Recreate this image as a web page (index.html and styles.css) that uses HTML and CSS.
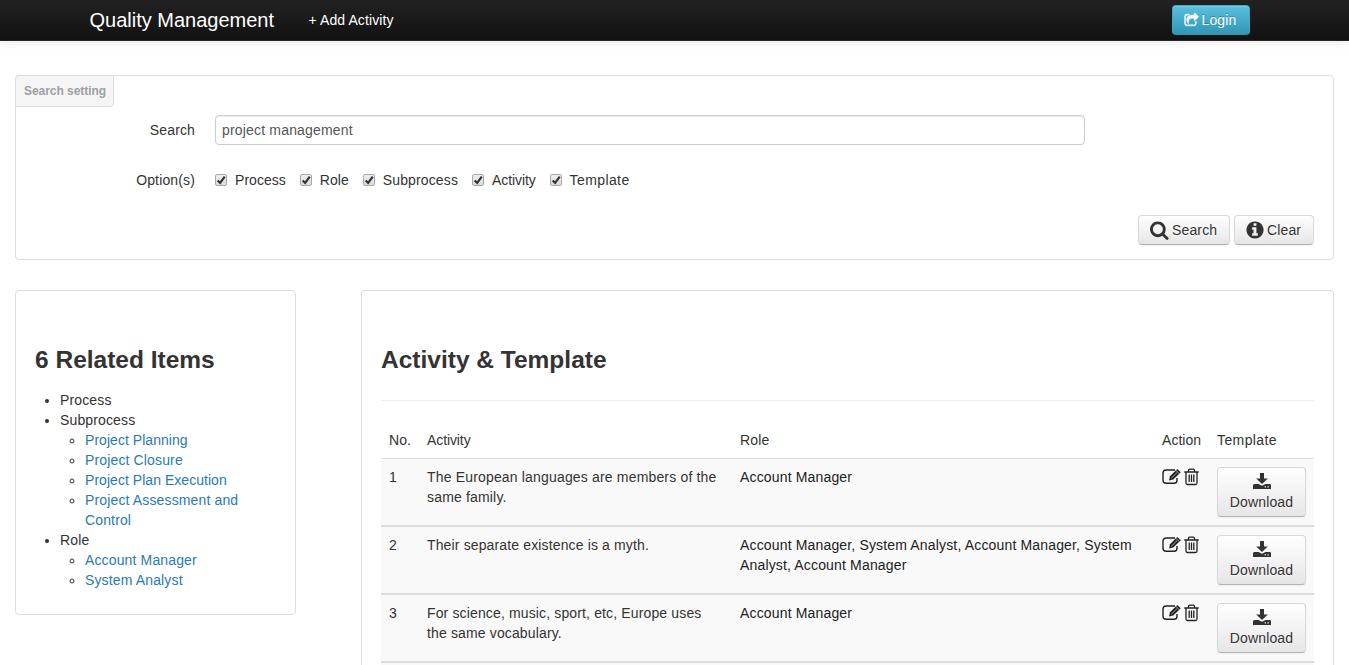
FILE: index.html
```html
<!DOCTYPE html>
<html lang="en">
<head>
<meta charset="utf-8">
<title>Quality Management</title>
<link rel="stylesheet" href="styles.css">
</head>
<body>
<svg class="sprite" aria-hidden="true">
  <symbol id="share" viewBox="0 0 1792 1792"><path d="M1472 989v259q0 119-84.5 203.5t-203.500 84.500h-832q-119 0-203.500-84.500t-84.500-203.500v-832q0-119 84.500-203.500t203.500-84.500h255q13 0 22.500 9.500t9.500 22.500q0 27-26 32-77 26-133 60-10 4-16 4h-112q-66 0-113 47t-47 113v832q0 66 47 113t113 47h832q66 0 113-47t47-113v-214q0-19 18-29 28-13 54-37 16-16 35-8 21 9 21 31zm237-496l-384 384q-18 19-45 19-12 0-25-5-39-17-39-59v-192h-160q-323 0-438 131-119 137-74 473 3 23-20 34-8 2-12 2-16 0-26-13-10-14-21-31t-39.500-68.500-49.500-99.500-38.500-114-17.500-122q0-49 3.500-91t14-90 28-88 47-81.500 68.500-74 94.500-61.500 124.500-48.500 159.500-30.500 196.500-11h160v-192q0-42 39-59 13-5 25-5 26 0 45 19l384 384q19 19 19 45t-19 45z"/></symbol>
  <symbol id="search" viewBox="0 0 1792 1792"><path d="M1152 832q0-185-131.5-316.500t-316.500-131.500-316.500 131.500-131.500 316.500 131.500 316.500 316.500 131.500 316.500-131.500 131.500-316.500zm512 832q0 52-38 90t-90 38q-54 0-90-38l-343-342q-179 124-399 124-143 0-273.500-55.500t-225-150-150-225-55.500-273.500 55.500-273.500 150-225 225-150 273.500-55.500 273.500 55.500 225 150 150 225 55.500 273.500q0 220-124 399l343 343q37 37 37 90z"/></symbol>
  <symbol id="info" viewBox="0 0 1792 1792"><path d="M1152 1376v-160q0-14-9-23t-23-9h-96v-512q0-14-9-23t-23-9h-320q-14 0-23 9t-9 23v160q0 14 9 23t23 9h96v320h-96q-14 0-23 9t-9 23v160q0 14 9 23t23 9h448q14 0 23-9t9-23zm-128-896v-160q0-14-9-23t-23-9h-192q-14 0-23 9t-9 23v160q0 14 9 23t23 9h192q14 0 23-9t9-23zm640 416q0 209-103 385.500t-279.500 279.500-385.500 103-385.500-103-279.500-279.500-103-385.500 103-385.500 279.500-279.500 385.500-103 385.500 103 279.500 279.500 103 385.500z"/></symbol>
  <symbol id="edit" viewBox="0 0 20 18"><path d="M13 2H4.200Q1 2 1 5v7.300q0 3 3.200 3h8q2.800 0 2.800-3V10" fill="none" stroke="currentColor" stroke-width="1.400"/><path d="M7 12.500l1-4.200L15.300 1l3.500 3.300L11.200 11.500z"/><path d="M9.300 10.200L15 4.700M14 2.500l3.400 3.200" fill="none" stroke="#f9f9f9" stroke-width=".6"/></symbol>
  <symbol id="trash" viewBox="0 0 15 18"><path d="M.3 4h14.400M4.500 4V2.500q0-1.300 1.300-1.300h3.400q1.300 0 1.300 1.300V4M2 4v11q0 1.500 1.500 1.500h8q1.500 0 1.500-1.500V4M5.200 6.500v7.500M7.500 6.500v7.500M9.800 6.500v7.500" fill="none" stroke="currentColor" stroke-width="1.300"/></symbol>
  <symbol id="download" viewBox="0 0 18 17"><path d="M7 0h4v5.500h3.800L9 11 3.200 5.500H7z"/><path fill-rule="evenodd" d="M1 11h4.500L9 12.800 12.500 11H17l1 1v4H0v-4zM11.700 13.300v1.200H13v-1.200zM14.500 13.300v1.200h1.300v-1.200z"/></symbol>
</svg>
<header class="navbar">
  <div class="navbar-inner">
    <a class="brand">Quality Management</a>
    <a class="nav-link">+ Add Activity</a>
    <button class="btn btn-info"><svg class="icon-share"><use href="#share"/></svg>Login</button>
  </div>
</header>
<main class="page">
  <section class="panel search-panel">
    <div class="tab">Search setting</div>
    <div class="field"><label class="label" for="q">Search</label><input class="query" id="q" type="text" value="project management"></div>
    <div class="field options">
      <span class="label">Option(s)</span>
      <label class="option"><span class="check"><svg viewBox="0 0 12 12"><path d="M2 6.500l3 3L10.500 2"/></svg></span>Process</label>
      <label class="option"><span class="check"><svg viewBox="0 0 12 12"><path d="M2 6.500l3 3L10.500 2"/></svg></span>Role</label>
      <label class="option mid"><span class="check"><svg viewBox="0 0 12 12"><path d="M2 6.500l3 3L10.500 2"/></svg></span>Subprocess</label>
      <label class="option tight"><span class="check"><svg viewBox="0 0 12 12"><path d="M2 6.500l3 3L10.500 2"/></svg></span>Activity</label>
      <label class="option last"><span class="check"><svg viewBox="0 0 12 12"><path d="M2 6.500l3 3L10.500 2"/></svg></span>Template</label>
    </div>
    <div class="buttons">
      <button class="btn btn-search"><svg class="icon-large"><use href="#search"/></svg>Search</button>
      <button class="btn btn-clear"><svg class="icon-large"><use href="#info"/></svg>Clear</button>
    </div>
  </section>
  <div class="columns">
    <aside class="panel related">
      <h3 class="title">6 Related Items</h3>
      <ul class="tree">
        <li>Process</li>
        <li>Subprocess
          <ul class="subtree">
            <li><a class="tight">Project Planning</a></li>
            <li><a>Project Closure</a></li>
            <li><a class="tight">Project Plan Execution</a></li>
            <li><a>Project Assessment and Control</a></li>
          </ul>
        </li>
        <li>Role
          <ul class="subtree">
            <li><a>Account Manager</a></li>
            <li><a>System Analyst</a></li>
          </ul>
        </li>
      </ul>
    </aside>
    <section class="panel results">
      <h3 class="title">Activity &amp; Template</h3>
      <hr class="rule">
      <div class="row head"><div class="tight">No.</div><div class="snug">Activity</div><div>Role</div><div class="tight">Action</div><div class="wide">Template</div></div>
      <div class="row item"><div>1</div><div class="lead">The European languages are members of the same family.</div><div class="role">Account Manager</div><div class="actions"><svg class="icon-edit"><use href="#edit"/></svg><svg class="icon-trash"><use href="#trash"/></svg></div><div><button class="btn btn-download"><svg class="icon-download"><use href="#download"/></svg>Download</button></div></div>
      <div class="row item"><div>2</div><div>Their separate existence is a myth.</div><div class="role">Account Manager, System Analyst, Account Manager, System Analyst, Account Manager</div><div class="actions"><svg class="icon-edit"><use href="#edit"/></svg><svg class="icon-trash"><use href="#trash"/></svg></div><div><button class="btn btn-download"><svg class="icon-download"><use href="#download"/></svg>Download</button></div></div>
      <div class="row item"><div>3</div><div>For science, music, sport, etc, Europe uses the same vocabulary.</div><div class="role">Account Manager</div><div class="actions"><svg class="icon-edit"><use href="#edit"/></svg><svg class="icon-trash"><use href="#trash"/></svg></div><div><button class="btn btn-download"><svg class="icon-download"><use href="#download"/></svg>Download</button></div></div>
      <div class="row next"></div>
    </section>
  </div>
</main>
</body>
</html>
```
FILE: styles.css
```css
* { box-sizing: border-box; }
body {
  margin: 0;
  height: 665px;
  overflow: hidden;
  font: 14px/20px "Liberation Sans", Arial, sans-serif;
  letter-spacing: .14px;
  color: #333;
  background: #fff;
}
svg { fill: currentColor; flex: none; }
.sprite { position: absolute; width: 0; height: 0; }
.navbar {
  height: 41px;
  background: linear-gradient(#222, #111);
  border-bottom: 1px solid #252525;
  box-shadow: 0 1px 10px rgba(0, 0, 0, .1);
}
.navbar-inner { display: flex; align-items: center; width: 1170px; height: 40px; margin: 0 auto; color: #fff; }
.brand { font-size: 20px; letter-spacing: 0; width: 219px; }
.nav-link { letter-spacing: .1px; }
.btn {
  display: flex;
  align-items: center;
  height: 30px;
  padding: 0 12px;
  font: inherit;
  letter-spacing: inherit;
  color: #333;
  text-shadow: 0 1px 1px rgba(255, 255, 255, .75);
  background: linear-gradient(#fff, #e6e6e6);
  border: 1px solid #ccc;
  border-color: #d9d9d9 #d9d9d9 #b3b3b3;
  border-radius: 4px;
  box-shadow: inset 0 1px 0 rgba(255, 255, 255, .2), 0 1px 2px rgba(0, 0, 0, .05);
}
.btn-info {
  width: 78px;
  margin-left: auto;
  margin-right: 10px;
  padding: 0 11px;
  gap: 3px;
  color: #fff;
  text-shadow: 0 -1px 0 rgba(0, 0, 0, .25);
  background: linear-gradient(#5bc0de, #2f96b4);
  border-color: #41a7c5 #41a7c5 #2f8fab;
}
.icon-share { width: 15px; height: 15px; stroke: currentColor; stroke-width: 50; }
.page { padding: 34px 15px 0; }
.panel { background: #fff; border: 1px solid #ddd; border-radius: 4px; }
.search-panel { height: 185px; }
.tab {
  width: 99px;
  height: 32px;
  margin: -1px 0 0 -1px;
  padding: 5px 0 5px 8px;
  font-size: 12px;
  font-weight: bold;
  letter-spacing: -.04px;
  white-space: nowrap;
  color: #9da0a4;
  background: #f5f5f5;
  border: 1px solid #ddd;
  border-radius: 4px 0 4px 0;
}
.field { display: flex; align-items: center; height: 30px; margin-top: 8px; }
.label { width: 179px; margin-right: 20px; text-align: right; }
.query {
  width: 870px;
  height: 30px;
  padding: 4px 6px;
  font: inherit;
  letter-spacing: .18px;
  color: #555;
  border: 1px solid #ccc;
  border-radius: 4px;
  box-shadow: inset 0 1px 1px rgba(0, 0, 0, .075);
}
.options { margin-top: 20px; }
.option { display: flex; align-items: center; margin-right: 14px; letter-spacing: .04px; }
.option.mid { letter-spacing: .13px; }
.option.tight { letter-spacing: -.1px; }
.option.last { letter-spacing: .4px; }
.check {
  width: 12px;
  height: 12px;
  margin-right: 8px;
  border: 1px solid #a8a8a8;
  border-radius: 2px;
  background: linear-gradient(#eee, #dcdcdc);
}
.check svg { display: block; width: 10px; height: 10px; fill: none; stroke: #333; stroke-width: 2.6; }
.buttons { display: flex; justify-content: flex-end; gap: 4px; margin: 20px 19px 0 0; }
.btn-search { width: 92px; padding: 0 11px; gap: 2px; }
.btn-clear { width: 80px; padding: 0 10px; gap: 2px; }
.icon-large { width: 20px; height: 20px; }
.columns { display: grid; grid-template-columns: 281px 973px; gap: 65px; align-items: start; margin-top: 30px; }
.related { height: 325px; padding: 49px 19px 0; }
.title { margin: 0 0 10px; font-size: 24.5px; line-height: 40px; letter-spacing: 0; }
.tree { margin: 0; padding: 0 0 0 25px; }
.subtree { margin: 0; padding: 0 0 0 25px; }
.tree a { color: #2a7ab5; }
.tight { letter-spacing: .04px; }
.snug { letter-spacing: -.1px; }
.wide { letter-spacing: .4px; }
.results { height: 375px; padding: 49px 19px 0; border-bottom: 0; border-radius: 4px 4px 0 0; }
.rule { margin: 20px 0; border: 0; border-top: 1px solid #eee; border-bottom: 1px solid #fff; }
.row { display: grid; grid-template-columns: 38px 313px 422px 55px 105px; }
.row > div { padding: 8px; }
.head { height: 37px; border-bottom: 1px solid #ddd; }
.item { height: 68px; background: #f9f9f9; border-bottom: 2px solid #ddd; }
.next { height: 2px; background: #f9f9f9; }
.lead { letter-spacing: .17px; }
.role { color: #222; letter-spacing: .16px; }
.row > .actions { display: flex; align-items: flex-start; gap: 2px; padding: 9px 0 0 8px; }
.icon-edit { width: 20px; height: 18px; color: #222; }
.icon-trash { width: 15px; height: 18px; color: #222; }
.btn-download { flex-direction: column; width: 89px; height: 50px; padding: 5px 0 4px; }
.icon-download { width: 18px; height: 17px; margin-bottom: 2px; }
```
